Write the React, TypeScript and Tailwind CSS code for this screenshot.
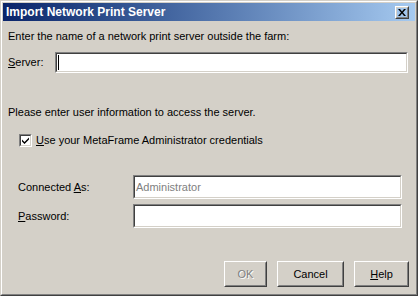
import React from "react";

const font = { fontFamily: '"Liberation Sans", Arial, sans-serif' };

// sunken 3D edit box, classic windows look
const Sunken = ({ className, children }: { className: string; children?: React.ReactNode }) => (
  <div className={`border border-t-[#808080] border-l-[#808080] border-b-white border-r-white ${className}`}>
    <div className="h-full w-full border border-t-[#404040] border-l-[#404040] border-b-[#d4d0c8] border-r-[#d4d0c8] bg-white flex items-center">
      {children}
    </div>
  </div>
);

const Btn = ({ className, children }: { className: string; children: React.ReactNode }) => (
  <div className={`border border-t-white border-l-white border-b-[#404040] border-r-[#404040] ${className}`}>
    <div className="h-full w-full border border-t-[#d4d0c8] border-l-[#d4d0c8] border-b-[#808080] border-r-[#808080] flex items-center justify-center text-[11px] text-black">
      {children}
    </div>
  </div>
);

export default function App() {
  return (
    <div style={font} className="w-[418px] h-[296px] bg-[#d4d0c8] border border-t-[#d4d0c8] border-l-[#d4d0c8] border-b-[#404040] border-r-[#404040]">
      <div className="h-full w-full border border-t-white border-l-white border-b-[#808080] border-r-[#808080] p-px flex flex-col">
        {/* title bar */}
        <div className="h-[18px] flex items-center justify-between bg-gradient-to-r from-[#0a246a] to-[#a6caf0] pl-[3px] pr-[6px]">
          <span className="text-white font-bold text-[12px] leading-none">Import Network Print Server</span>
          <Btn className="w-[14px] h-[13px]">
            <svg width="8" height="7" viewBox="0 0 8 7">
              <path d="M0 0h2l2 2.5L6 0h2L5 3.5 8 7H6L4 4.5 2 7H0l3-3.5z" fill="#000" />
            </svg>
          </Btn>
        </div>

        <div className="flex flex-col pl-[5px] text-[11px] text-black leading-[13px]">
          <div className="mt-[9px]">Enter the name of a network print server outside the farm:</div>

          <div className="mt-[9px] flex items-center">
            <span className="w-[47px]"><u>S</u>erver:</span>
            <Sunken className="w-[353px] h-[21px]">
              <div className="ml-[1px] w-px h-[15px] bg-black" />
            </Sunken>
          </div>

          <div className="mt-[33px]">Please enter user information to access the server.</div>

          <div className="mt-[15px] ml-[11px] flex items-center gap-[4px]">
            <Sunken className="w-[13px] h-[13px]">
              <svg width="9" height="9" viewBox="0 0 9 9">
                <path d="M1 3.5l2.5 2.5L8 1.5v2L3.5 8 1 5.5z" fill="#000" />
              </svg>
            </Sunken>
            <span><u>U</u>se your MetaFrame Administrator credentials</span>
          </div>

          <div className="mt-[28px] ml-[10px] flex items-center">
            <span className="w-[115px]">Connected <u>A</u>s:</span>
            <Sunken className="w-[269px] h-[24px]">
              <span className="pl-[1px] text-[#808080]">Administrator</span>
            </Sunken>
          </div>

          <div className="mt-[5px] ml-[10px] flex items-center">
            <span className="w-[115px]"><u>P</u>assword:</span>
            <Sunken className="w-[269px] h-[24px]" />
          </div>

          <div className="mt-[33px] flex justify-end gap-[10px] pr-[6px]">
            <Btn className="w-[43px] h-[26px]">
              <span className="text-[#808080] [text-shadow:1px_1px_0_#fff]">OK</span>
            </Btn>
            <Btn className="w-[67px] h-[26px]">Cancel</Btn>
            <Btn className="w-[55px] h-[26px]">
              <span><u>H</u>elp</span>
            </Btn>
          </div>
        </div>
      </div>
    </div>
  );
}
